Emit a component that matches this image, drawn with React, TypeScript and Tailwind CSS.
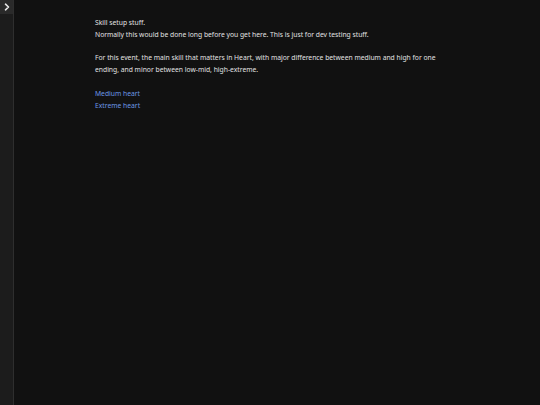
import React from "react";

export default function App() {
  return (
    <div className="flex h-[405px] w-[540px] bg-[#111111] text-[#e2e2e2]" style={{ fontFamily: '"Noto Sans", sans-serif' }}>
      <div className="flex w-[14px] flex-col border-r border-[#2e2e2e] bg-[#1c1c1c]">
        <div className="flex h-[14px] w-[13px] items-center justify-center bg-[#2a2a2a]">
          <svg width="8" height="8" viewBox="0 0 8 8" fill="none">
            <path d="M2.5 1.2 L5.5 4 L2.5 6.8" stroke="#e8e8e8" strokeWidth="1.6" strokeLinecap="round" strokeLinejoin="round" />
          </svg>
        </div>
      </div>
      <div className="flex-1 pl-[81px] pt-[17px] text-[6.75px] leading-[11.8px]">
        <p>Skill setup stuff.</p>
        <p>Normally this would be done long before you get here. This is just for dev testing stuff.</p>
        <p className="mt-[11.8px]">For this event, the main skill that matters in Heart, with major difference between medium and high for one</p>
        <p>ending, and minor between low-mid, high-extreme.</p>
        <div className="mt-[11.8px] flex flex-col items-start text-[#6b97e4]">
          <a>Medium heart</a>
          <a>Extreme heart</a>
        </div>
      </div>
    </div>
  );
}
